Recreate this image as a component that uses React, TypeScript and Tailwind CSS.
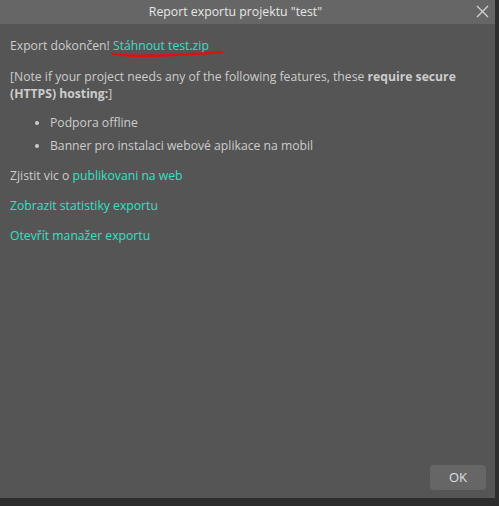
export default function App() {
  return (
    <div
      className="w-[499px] h-[506px] bg-[#2d2d2d] overflow-hidden"
      style={{ fontFamily: '"Open Sans", "Noto Sans", sans-serif' }}
    >
      <div className="w-[495px] h-[498px] bg-[#555555] flex flex-col">
        {/* TITLE BAR */}
        <div className="relative h-6 bg-[#666666] flex items-center justify-center pr-6">
          <span className="text-[12.3px] text-[#e6e6e6]">Report exportu projektu "test"</span>
          <svg
            className="absolute right-[6px] top-[5px]"
            width="13"
            height="13"
            viewBox="0 0 13 13"
          >
            <path d="M1 1L12 12M12 1L1 12" stroke="#cfcfcf" strokeWidth="1.4" />
          </svg>
        </div>

        {/* BODY */}
        <div className="flex-1 px-[10px] pt-[13px] text-[12.2px] leading-[17px] text-[#cccccc]">
          <p className="relative">
            Export dokončen!{" "}
            <span className="text-[#33e0c4]">Stáhnout test.zip</span>
            <svg
              className="absolute left-[101px] top-[12px]"
              width="114"
              height="10"
              viewBox="0 0 114 10"
            >
              <path
                d="M2 5 C 20 8, 60 7, 111 3"
                stroke="#e01010"
                strokeWidth="2.4"
                fill="none"
                strokeLinecap="round"
              />
            </svg>
          </p>

          <p className="mt-[14px]">
            [Note if your project needs any of the following features, these{" "}
            <b>require secure (HTTPS) hosting:</b>]
          </p>

          <ul className="mt-[12px] pl-[40px] list-disc space-y-[6px]">
            <li>Podpora offline</li>
            <li>Banner pro instalaci webové aplikace na mobil</li>
          </ul>

          <p className="mt-[13px]">
            Zjistit vic o <span className="text-[#33e0c4]">publikovani na web</span>
          </p>
          <p className="mt-[13px] text-[#33e0c4]">Zobrazit statistiky exportu</p>
          <p className="mt-[13px] text-[#33e0c4]">Otevřít manažer exportu</p>
        </div>

        {/* FOOTER */}
        <div className="flex justify-end px-[9px] pb-[8px]">
          <button className="w-[56px] h-[25px] rounded bg-[#666666] text-[13px] text-[#e0e0e0]">
            OK
          </button>
        </div>
      </div>
    </div>
  );
}
